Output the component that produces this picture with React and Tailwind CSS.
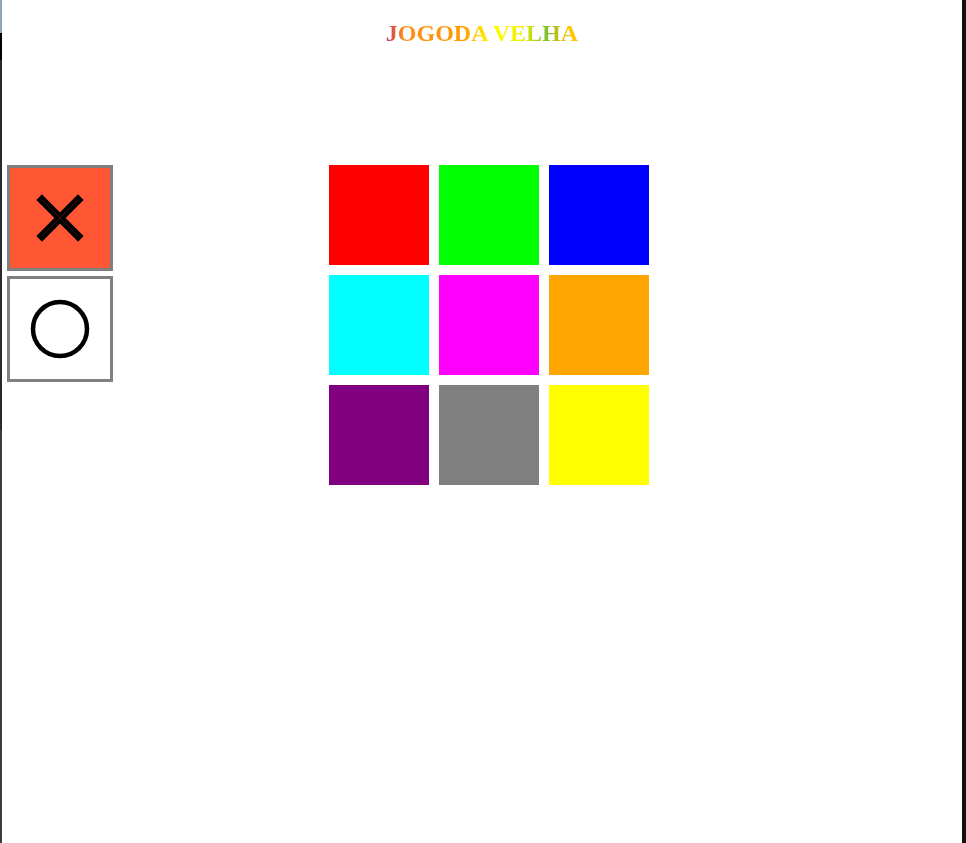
import React, { useState } from 'react';

const cores = [
  'bg-[#ff0000]', 'bg-[#00ff00]', 'bg-[#0000ff]',
  'bg-[#00ffff]', 'bg-[#ff00ff]', 'bg-[#ffa500]',
  'bg-[#800080]', 'bg-[#808080]', 'bg-[#ffff00]',
];

function IconeX() {
  return (
    <svg width="60" height="60" viewBox="0 0 60 60">
      <path d="M12 12 L48 48 M48 12 L12 48" stroke="#000" strokeWidth="8" strokeLinecap="square" />
      <path d="M12 12 L48 48 M48 12 L12 48" stroke="#ff5733" strokeWidth="0.5" opacity="0.45" />
    </svg>
  );
}

function IconeO() {
  return (
    <svg width="60" height="60" viewBox="0 0 60 60">
      <circle cx="30" cy="30" r="27" fill="none" stroke="#000" strokeWidth="4.5" />
    </svg>
  );
}

export default function App() {
  const [jogador, setJogador] = useState('X');

  return (
    <div className="flex min-h-[843px] w-[966px] bg-white">
      {/* bordas da janela */}
      <div className="flex w-[2px] flex-col">
        <div className="h-[33px] bg-[#8fa9b1]" />
        <div className="h-[27px] bg-black" />
        <div className="h-[370px] bg-[#2a2a2a]" />
        <div className="flex-1 bg-[#3c3c3c]" />
      </div>

      <div className="w-[960px] bg-white" style={{ fontFamily: '"Liberation Serif", serif' }}>
        <div className="pt-[21px] text-center">
          <h1 className="inline-block bg-[linear-gradient(90deg,#b8406a_0%,#e8603a_5%,#ff8c1a_9%,#ff9a00_40%,#ffff00_55%,#f0f000_70%,#80c030_84%,#ffc400_95%)] bg-clip-text text-[24px] font-bold leading-[24px] text-transparent">
            JOGODA VELHA
          </h1>
        </div>

        <div className="mt-[117px] flex items-start">
          <div className="ml-[5px] flex flex-col gap-[5px]">
            <button
              onClick={() => setJogador('X')}
              className={`flex h-[106px] w-[106px] items-center justify-center border-[3px] border-[#808080] ${jogador === 'X' ? 'bg-[#ff5733]' : 'bg-white'}`}
            >
              <IconeX />
            </button>
            <button
              onClick={() => setJogador('O')}
              className={`flex h-[106px] w-[106px] items-center justify-center border-[3px] border-[#808080] ${jogador === 'O' ? 'bg-[#ff5733]' : 'bg-white'}`}
            >
              <IconeO />
            </button>
          </div>

          <div className="ml-[216px] grid grid-cols-[repeat(3,100px)] gap-[10px]">
            {cores.map((cor, i) => (
              <div key={i} className={`h-[100px] w-[100px] ${cor}`} />
            ))}
          </div>
        </div>
      </div>

      <div className="w-[4px] bg-[#111111]" />
    </div>
  );
}
